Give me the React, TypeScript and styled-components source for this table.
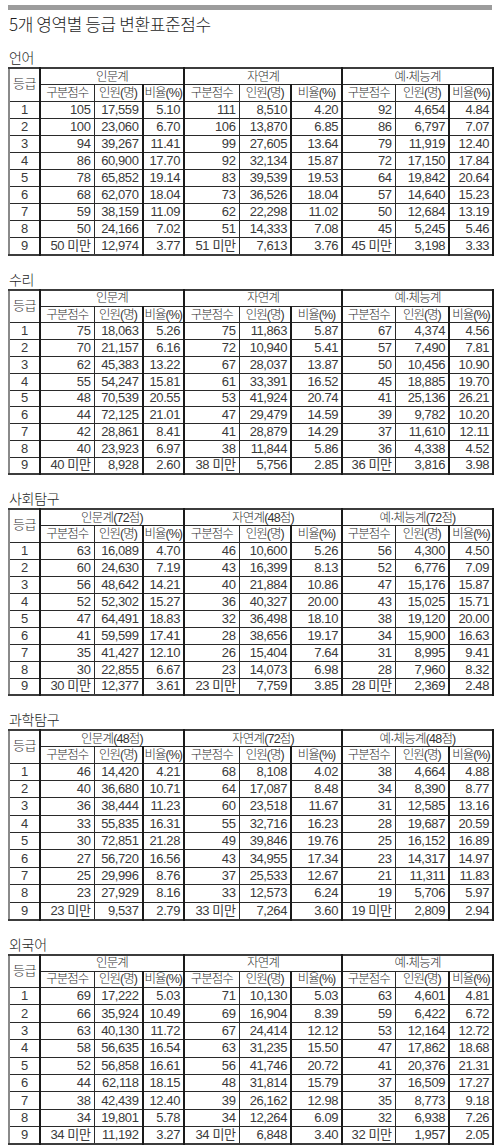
import React from "react";
import styled, { createGlobalStyle } from "styled-components";

const Global = createGlobalStyle`
  html, body { margin: 0; padding: 0; background: #ffffff; }
  body { font-family: "Noto Sans CJK KR", sans-serif; color: #2a2a2a; }
`;

type Row = [string, string, string, string, string, string, string, string, string];
type Section = { name: string; groups: [string, string, string]; rowH: number; rows: Row[] };

const sections: Section[] = [
  {
    name: "언어",
    groups: ["인문계", "자연계", "예·체능계"],
    rowH: 17.1,
    rows: [
      ["105", "17,559", "5.10", "111", "8,510", "4.20", "92", "4,654", "4.84"],
      ["100", "23,060", "6.70", "106", "13,870", "6.85", "86", "6,797", "7.07"],
      ["94", "39,267", "11.41", "99", "27,605", "13.64", "79", "11,919", "12.40"],
      ["86", "60,900", "17.70", "92", "32,134", "15.87", "72", "17,150", "17.84"],
      ["78", "65,852", "19.14", "83", "39,539", "19.53", "64", "19,842", "20.64"],
      ["68", "62,070", "18.04", "73", "36,526", "18.04", "57", "14,640", "15.23"],
      ["59", "38,159", "11.09", "62", "22,298", "11.02", "50", "12,684", "13.19"],
      ["50", "24,166", "7.02", "51", "14,333", "7.08", "45", "5,245", "5.46"],
      ["50 미만", "12,974", "3.77", "51 미만", "7,613", "3.76", "45 미만", "3,198", "3.33"],
    ],
  },
  {
    name: "수리",
    groups: ["인문계", "자연계", "예·체능계"],
    rowH: 16.8,
    rows: [
      ["75", "18,063", "5.26", "75", "11,863", "5.87", "67", "4,374", "4.56"],
      ["70", "21,157", "6.16", "72", "10,940", "5.41", "57", "7,490", "7.81"],
      ["62", "45,383", "13.22", "67", "28,037", "13.87", "50", "10,456", "10.90"],
      ["55", "54,247", "15.81", "61", "33,391", "16.52", "45", "18,885", "19.70"],
      ["48", "70,539", "20.55", "53", "41,924", "20.74", "41", "25,136", "26.21"],
      ["44", "72,125", "21.01", "47", "29,479", "14.59", "39", "9,782", "10.20"],
      ["42", "28,861", "8.41", "41", "28,879", "14.29", "37", "11,610", "12.11"],
      ["40", "23,923", "6.97", "38", "11,844", "5.86", "36", "4,338", "4.52"],
      ["40 미만", "8,928", "2.60", "38 미만", "5,756", "2.85", "36 미만", "3,816", "3.98"],
    ],
  },
  {
    name: "사회탐구",
    groups: ["인문계(72점)", "자연계(48점)", "예·체능계(72점)"],
    rowH: 17,
    rows: [
      ["63", "16,089", "4.70", "46", "10,600", "5.26", "56", "4,300", "4.50"],
      ["60", "24,630", "7.19", "43", "16,399", "8.13", "52", "6,776", "7.09"],
      ["56", "48,642", "14.21", "40", "21,884", "10.86", "47", "15,176", "15.87"],
      ["52", "52,302", "15.27", "36", "40,327", "20.00", "43", "15,025", "15.71"],
      ["47", "64,491", "18.83", "32", "36,498", "18.10", "38", "19,120", "20.00"],
      ["41", "59,599", "17.41", "28", "38,656", "19.17", "34", "15,900", "16.63"],
      ["35", "41,427", "12.10", "26", "15,404", "7.64", "31", "8,995", "9.41"],
      ["30", "22,855", "6.67", "23", "14,073", "6.98", "28", "7,960", "8.32"],
      ["30 미만", "12,377", "3.61", "23 미만", "7,759", "3.85", "28 미만", "2,369", "2.48"],
    ],
  },
  {
    name: "과학탐구",
    groups: ["인문계(48점)", "자연계(72점)", "예·체능계(48점)"],
    rowH: 17.4,
    rows: [
      ["46", "14,420", "4.21", "68", "8,108", "4.02", "38", "4,664", "4.88"],
      ["40", "36,680", "10.71", "64", "17,087", "8.48", "34", "8,390", "8.77"],
      ["36", "38,444", "11.23", "60", "23,518", "11.67", "31", "12,585", "13.16"],
      ["33", "55,835", "16.31", "55", "32,716", "16.23", "28", "19,687", "20.59"],
      ["30", "72,851", "21.28", "49", "39,846", "19.76", "25", "16,152", "16.89"],
      ["27", "56,720", "16.56", "43", "34,955", "17.34", "23", "14,317", "14.97"],
      ["25", "29,996", "8.76", "37", "25,533", "12.67", "21", "11,311", "11.83"],
      ["23", "27,929", "8.16", "33", "12,573", "6.24", "19", "5,706", "5.97"],
      ["23 미만", "9,537", "2.79", "33 미만", "7,264", "3.60", "19 미만", "2,809", "2.94"],
    ],
  },
  {
    name: "외국어",
    groups: ["인문계", "자연계", "예·체능계"],
    rowH: 17.4,
    rows: [
      ["69", "17,222", "5.03", "71", "10,130", "5.03", "63", "4,601", "4.81"],
      ["66", "35,924", "10.49", "69", "16,904", "8.39", "59", "6,422", "6.72"],
      ["63", "40,130", "11.72", "67", "24,414", "12.12", "53", "12,164", "12.72"],
      ["58", "56,635", "16.54", "63", "31,235", "15.50", "47", "17,862", "18.68"],
      ["52", "56,858", "16.61", "56", "41,746", "20.72", "41", "20,376", "21.31"],
      ["44", "62,118", "18.15", "48", "31,814", "15.79", "37", "16,509", "17.27"],
      ["38", "42,439", "12.40", "39", "26,162", "12.98", "35", "8,773", "9.18"],
      ["34", "19,801", "5.78", "34", "12,264", "6.09", "32", "6,938", "7.26"],
      ["34 미만", "11,192", "3.27", "34 미만", "6,848", "3.40", "32 미만", "1,957", "2.05"],
    ],
  },
];

const colWidths = [31, 54, 48.5, 41.5, 55, 52, 51, 53, 54, 44];
const subHeads = ["구분점수", "인원(명)", "비율(%)"];

const Page = styled.div`
  width: 484px;
  padding: 5px 8px 0 8px;
`;

const TopBar = styled.div`
  height: 5px;
  background: #9c9c9c;
`;

const Title = styled.h1`
  margin: 4px 0 0 1px;
  font-family: "Noto Sans CJK KR", sans-serif;
  font-weight: 300;
  font-size: 17px;
  line-height: 20px;
  color: #1e1e1e;
  letter-spacing: -0.4px;
`;

const SectionBox = styled.section`
  margin-top: 15px;
`;

const Label = styled.h2`
  margin: 0 0 2px 1px;
  font-family: "Noto Sans CJK KR", sans-serif;
  font-weight: 300;
  font-size: 14px;
  line-height: 16px;
  color: #1e1e1e;
  letter-spacing: -0.3px;
`;

const Table = styled.table`
  width: 484px;
  table-layout: fixed;
  border-collapse: collapse;
  border: 2px solid #3c3c3c;
  border-left-color: #8a8a8a;
  font-family: "Liberation Sans", "Noto Sans CJK KR", sans-serif;
  color: #2e2e2e;
`;

const HeadRow = styled.tr`
  height: 16.5px;
`;

const BodyRow = styled.tr<{ $h: number }>`
  height: ${(p) => p.$h}px;
`;

const cellBorder = (sep?: boolean) =>
  sep ? "2px solid #1a1a1a" : "1px solid #2a2a2a";

const headFont = `"Liberation Sans", "Noto Sans CJK KR", sans-serif`;

const GradeHead = styled.th`
  font-weight: 300;
  font-size: 13px;
  font-family: ${headFont};
  padding: 0 0 4px 0;
  border: 1px solid #2a2a2a;
  border-right: 2px solid #1a1a1a;
  color: #333;
  vertical-align: middle;
  text-align: center;
  letter-spacing: -0.5px;
`;

const GroupHead = styled.th`
  font-weight: 300;
  font-size: 12.5px;
  font-family: ${headFont};
  letter-spacing: -0.8px;
  line-height: 14px;
  padding: 0;
  border: 1px solid #2a2a2a;
  border-right: 2px solid #1a1a1a;
  color: #333;
  text-align: center;
`;

const SubHead = styled.th<{ $sep?: boolean }>`
  font-weight: 300;
  font-size: 12.5px;
  font-family: ${headFont};
  letter-spacing: -1px;
  line-height: 14px;
  padding: 0;
  white-space: nowrap;
  border: 1px solid #2a2a2a;
  border-right: ${(p) => cellBorder(p.$sep)};
  color: #333;
  text-align: center;
`;

const GradeCell = styled.td`
  font-size: 13px;
  line-height: 14px;
  padding: 0;
  text-align: center;
  border: 1px solid #2a2a2a;
  border-right: 2px solid #1a1a1a;
  color: #3a3a3a;
`;

const NumCell = styled.td<{ $sep?: boolean }>`
  font-size: 13px;
  line-height: 14px;
  padding: 0 3px 0 0;
  text-align: right;
  white-space: nowrap;
  border: 1px solid #2a2a2a;
  border-right: ${(p) => cellBorder(p.$sep)};
  color: #3a3a3a;
  letter-spacing: -0.4px;
`;

function ScoreTable({ section }: { section: Section }) {
  return (
    <Table>
      <colgroup>
        {colWidths.map((w, i) => (
          <col key={i} style={{ width: `${w}px` }} />
        ))}
      </colgroup>
      <thead>
        <HeadRow>
          <GradeHead rowSpan={2}>등급</GradeHead>
          {section.groups.map((g) => (
            <GroupHead key={g} colSpan={3}>
              {g}
            </GroupHead>
          ))}
        </HeadRow>
        <HeadRow>
          {[0, 1, 2].map((g) =>
            subHeads.map((s, i) => (
              <SubHead key={`${g}-${i}`} $sep={i > 0}>
                {s}
              </SubHead>
            ))
          )}
        </HeadRow>
      </thead>
      <tbody>
        {section.rows.map((r, ri) => (
          <BodyRow key={ri} $h={section.rowH}>
            <GradeCell>{ri + 1}</GradeCell>
            {r.map((v, ci) => (
              <NumCell key={ci} $sep={ci % 3 !== 0}>
                {v}
              </NumCell>
            ))}
          </BodyRow>
        ))}
      </tbody>
    </Table>
  );
}

export default function App() {
  return (
    <Page>
      <Global />
      <TopBar />
      <Title>5개 영역별 등급 변환표준점수</Title>
      {sections.map((s) => (
        <SectionBox key={s.name}>
          <Label>{s.name}</Label>
          <ScoreTable section={s} />
        </SectionBox>
      ))}
    </Page>
  );
}
